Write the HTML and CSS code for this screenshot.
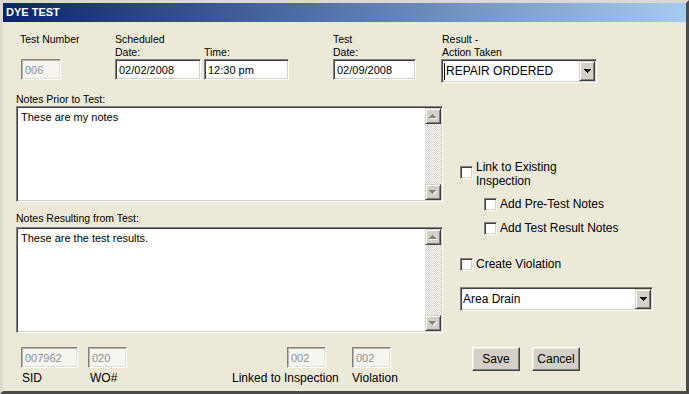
FILE: index.html
```html
<!DOCTYPE html>
<html>
<head>
<meta charset="utf-8">
<title>Dye Test</title>
<link rel="stylesheet" href="styles.css">
</head>
<body>
<div class="window">
  <div class="titlebar"><span class="title">DYE TEST</span></div>
  <div class="form">
    <div class="top-grid">
      <span class="lbl">Test Number</span>
      <span class="lbl">Scheduled</span>
      <span class="lbl"></span>
      <span class="lbl">Test</span>
      <span class="lbl lbl-result">Result -</span>

      <span class="lbl"></span>
      <span class="lbl">Date:</span>
      <span class="lbl">Time:</span>
      <span class="lbl">Date:</span>
      <span class="lbl lbl-result">Action Taken</span>

      <div class="fld dis w-testno">006</div>
      <div class="fld w-date">02/02/2008</div>
      <div class="fld w-time">12:30 pm</div>
      <div class="fld w-tdate">02/09/2008</div>
      <div class="sel w-result">
        <span class="caret"></span>
        <span class="sel-text">REPAIR ORDERED</span>
        <span class="sel-btn"><svg width="7" height="4" viewBox="0 0 7 4"><rect x="0" y="0" width="7" height="1"/><rect x="1" y="1" width="5" height="1"/><rect x="2" y="2" width="3" height="1"/><rect x="3" y="3" width="1" height="1"/></svg></span>
      </div>
    </div>

    <div class="main">
      <div class="notes">
        <div class="lbl">Notes Prior to Test:</div>
        <div class="textbox tb1">
          <div class="tb-text">These are my notes</div>
          <div class="scrollbar">
            <span class="sb-btn"><svg width="8" height="5" viewBox="0 0 8 5"><g fill="#fff"><rect x="4" y="1" width="1" height="1"/><rect x="3" y="2" width="3" height="1"/><rect x="2" y="3" width="5" height="1"/><rect x="1" y="4" width="7" height="1"/></g><g fill="#808080"><rect x="3" y="0" width="1" height="1"/><rect x="2" y="1" width="3" height="1"/><rect x="1" y="2" width="5" height="1"/><rect x="0" y="3" width="7" height="1"/></g></svg></span>
            <span class="sb-track"></span>
            <span class="sb-btn"><svg width="8" height="5" viewBox="0 0 8 5"><g fill="#fff"><rect x="1" y="1" width="7" height="1"/><rect x="2" y="2" width="5" height="1"/><rect x="3" y="3" width="3" height="1"/><rect x="4" y="4" width="1" height="1"/></g><g fill="#808080"><rect x="0" y="0" width="7" height="1"/><rect x="1" y="1" width="5" height="1"/><rect x="2" y="2" width="3" height="1"/><rect x="3" y="3" width="1" height="1"/></g></svg></span>
          </div>
        </div>
        <div class="lbl lbl-gap">Notes Resulting from Test:</div>
        <div class="textbox tb2">
          <div class="tb-text">These are the test results.</div>
          <div class="scrollbar">
            <span class="sb-btn"><svg width="8" height="5" viewBox="0 0 8 5"><g fill="#fff"><rect x="4" y="1" width="1" height="1"/><rect x="3" y="2" width="3" height="1"/><rect x="2" y="3" width="5" height="1"/><rect x="1" y="4" width="7" height="1"/></g><g fill="#808080"><rect x="3" y="0" width="1" height="1"/><rect x="2" y="1" width="3" height="1"/><rect x="1" y="2" width="5" height="1"/><rect x="0" y="3" width="7" height="1"/></g></svg></span>
            <span class="sb-track"></span>
            <span class="sb-btn"><svg width="8" height="5" viewBox="0 0 8 5"><g fill="#fff"><rect x="1" y="1" width="7" height="1"/><rect x="2" y="2" width="5" height="1"/><rect x="3" y="3" width="3" height="1"/><rect x="4" y="4" width="1" height="1"/></g><g fill="#808080"><rect x="0" y="0" width="7" height="1"/><rect x="1" y="1" width="5" height="1"/><rect x="2" y="2" width="3" height="1"/><rect x="3" y="3" width="1" height="1"/></g></svg></span>
          </div>
        </div>
      </div>

      <div class="options">
        <div class="opt opt-link"><span class="cb"></span><span>Link to Existing<br>Inspection</span></div>
        <div class="opt sub opt-pre"><span class="cb"></span><span>Add Pre-Test Notes</span></div>
        <div class="opt sub opt-res"><span class="cb"></span><span>Add Test Result Notes</span></div>
        <div class="opt opt-viol"><span class="cb"></span><span>Create Violation</span></div>
        <div class="sel w-area">
          <span class="sel-text plain">Area Drain</span>
          <span class="sel-btn"><svg width="7" height="4" viewBox="0 0 7 4"><rect x="0" y="0" width="7" height="1"/><rect x="1" y="1" width="5" height="1"/><rect x="2" y="2" width="3" height="1"/><rect x="3" y="3" width="1" height="1"/></svg></span>
        </div>
      </div>

      <div class="ids">
        <div class="ids-fields">
          <div class="fld dis w-sid">007962</div>
          <div class="fld dis w-wo">020</div>
          <div class="fld dis w-link">002</div>
          <div class="fld dis w-viol">002</div>
        </div>
        <div class="ids-labels">
          <span class="idl l-sid">SID</span>
          <span class="idl l-wo">WO#</span>
          <span class="idl l-link">Linked to Inspection</span>
          <span class="idl">Violation</span>
        </div>
      </div>

      <div class="actions">
        <span class="btn">Save</span>
        <span class="btn">Cancel</span>
      </div>
    </div>
  </div>
</div>
</body>
</html>
```

FILE: styles.css
```css
body {
  margin: 0;
  background: #ECE9D8;
}

.window {
  width: 689px;
  height: 394px;
  box-sizing: border-box;
  border-style: solid;
  border-width: 3px;
  border-color: #dcd9ce #4a4a4a #4a4a4a #dcd9ce;
  background: #ECE9D8;
  font-family: "Liberation Sans", Arial, sans-serif;
  color: #000;
  overflow: hidden;
}

.titlebar {
  height: 19px;
  background: linear-gradient(to right, #0A246A, #A6CAF0);
}

.title {
  display: block;
  padding-left: 3px;
  font-size: 11px;
  font-weight: bold;
  line-height: 19px;
  color: #fff;
}

.form {
  padding: 11px 0 0 13px;
}

.lbl {
  display: block;
  font-size: 10.5px;
  line-height: 13px;
  white-space: nowrap;
}

.top-grid {
  display: grid;
  grid-template-columns: 95px 89px 129px 108px 1fr;
  grid-template-rows: 13px 13px 24px;
  margin-left: 4px;
  align-items: start;
}

.lbl-result {
  margin-left: 1px;
}

/* text fields */
.fld {
  box-sizing: border-box;
  height: 21px;
  border: 1px solid;
  border-color: #808080 #fff #fff #808080;
  box-shadow: inset 1px 1px #404040, inset -1px -1px #d4d0c8;
  background: #fff;
  font-size: 11px;
  line-height: 16px;
  padding: 2px 3px 0;
  white-space: nowrap;
}

.fld.dis {
  background: #f6f5f0;
  color: #8e8e8e;
  box-shadow: inset 1px 1px #b8b5aa, inset -1px -1px #e2dfd4;
}

.w-testno { width: 40px; margin-left: 1px; }
.w-date { width: 86px; }
.w-time { width: 85px; }
.w-tdate { width: 83px; }

/* select */
.sel {
  box-sizing: border-box;
  height: 24px;
  border: 1px solid;
  border-color: #808080 #fff #fff #808080;
  box-shadow: inset 1px 1px #404040, inset -1px -1px #d4d0c8;
  background: #fff;
  padding: 1px;
  display: flex;
  align-items: center;
  font-size: 12px;
}

.w-result { width: 156px; }
.w-area { width: 193px; margin-top: 16px; }

.caret {
  width: 1px;
  height: 17px;
  margin-left: 1px;
  background: #000;
}

.sel-text {
  flex: 1;
  margin-left: 1px;
  white-space: nowrap;
  line-height: 20px;
}

.sel-btn {
  box-sizing: border-box;
  width: 16px;
  height: 20px;
  background: #d4d0c8;
  border: 1px solid;
  border-color: #d4d0c8 #404040 #404040 #d4d0c8;
  box-shadow: inset 1px 1px #fff, inset -1px -1px #808080;
  display: flex;
  align-items: center;
  justify-content: center;
}

.sel-btn svg {
  fill: #000;
  display: block;
}

/* main area */
.main {
  display: grid;
  grid-template-columns: 427px 1fr;
  column-gap: 17px;
  row-gap: 14px;
  margin-top: 10px;
}

.lbl-gap {
  margin-top: 10px;
  margin-bottom: 2px;
}

.textbox {
  box-sizing: border-box;
  width: 427px;
  border: 1px solid;
  border-color: #808080 #fff #fff #808080;
  box-shadow: inset 1px 1px #404040, inset -1px -1px #d4d0c8;
  background: #fff;
  padding: 1px;
  display: flex;
}

.tb1 { height: 96px; }
.tb2 { height: 106px; }

.tb-text {
  flex: 1;
  font-size: 11px;
  line-height: 13px;
  padding: 3px 3px 0;
}

.scrollbar {
  width: 16px;
  display: flex;
  flex-direction: column;
}

.sb-btn {
  box-sizing: border-box;
  width: 16px;
  height: 16px;
  background: #d4d0c8;
  border: 1px solid;
  border-color: #d4d0c8 #404040 #404040 #d4d0c8;
  box-shadow: inset 1px 1px #fff, inset -1px -1px #808080;
  display: flex;
  align-items: center;
  justify-content: center;
}

.sb-btn svg {
  display: block;
}

.sb-track {
  flex: 1;
  background: repeating-conic-gradient(#d4d0c8 0 25%, #fff 0 50%) 0 0 / 2px 2px;
}

/* options */
.options {
  padding-top: 67px;
}

.opt {
  display: flex;
  align-items: center;
  gap: 3px;
  font-size: 12px;
  line-height: 14px;
  white-space: nowrap;
}

.cb {
  box-sizing: border-box;
  width: 13px;
  height: 13px;
  flex-shrink: 0;
  border: 1px solid;
  border-color: #808080 #fff #fff #808080;
  box-shadow: inset 1px 1px #404040, inset -1px -1px #d4d0c8;
  background: #fff;
}

.opt-link {
  align-items: flex-start;
}

.opt-link .cb {
  margin-top: 6px;
}

.sub {
  margin-left: 24px;
}

.opt-pre { margin-top: 9px; }
.opt-res { margin-top: 10px; }
.opt-viol { margin-top: 22px; }

/* bottom id fields */
.ids-fields {
  display: flex;
  padding-left: 5px;
}

.w-sid { width: 57px; }
.w-wo { width: 39px; margin-left: 10px; }
.w-link { width: 39px; margin-left: 160px; }
.w-viol { width: 39px; margin-left: 26px; }

.ids-labels {
  display: flex;
  margin-top: 3px;
  padding-left: 6px;
  font-size: 12px;
  line-height: 14px;
}

.idl {
  white-space: nowrap;
}

.l-sid { width: 68px; }
.l-wo { width: 142px; }
.l-link { width: 120px; }

/* buttons */
.actions {
  display: flex;
  gap: 12px;
  padding-left: 12px;
  align-items: flex-start;
}

.btn {
  box-sizing: border-box;
  width: 48px;
  height: 24px;
  background: #d4d0c8;
  border: 1px solid;
  border-color: #fff #404040 #404040 #fff;
  box-shadow: inset -1px -1px #808080, inset 1px 1px #ece9d8;
  display: flex;
  align-items: center;
  justify-content: center;
  font-size: 12px;
}
```
